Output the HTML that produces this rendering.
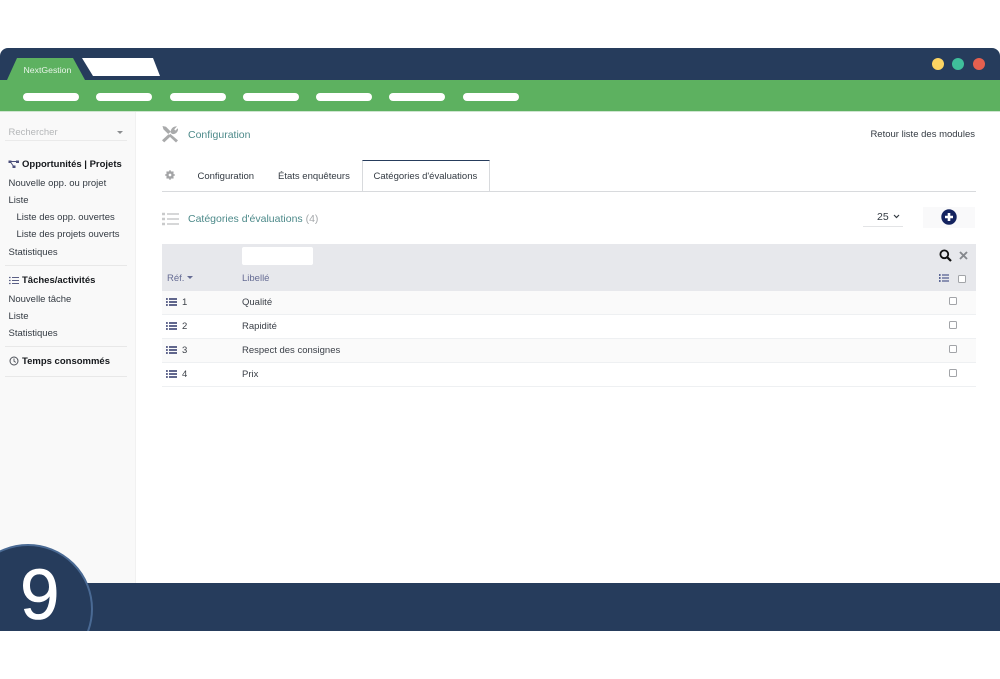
<!DOCTYPE html>
<html><head><meta charset="utf-8">
<style>
html,body{margin:0;padding:0;background:#fff}
body{width:1000px;height:679px;position:relative;overflow:hidden;font-family:"Liberation Sans",sans-serif;font-size:9.5px;color:#3a3f47}
#w{position:absolute;left:0;top:0;width:1000px;height:679px;overflow:hidden;filter:blur(.3px)}
.a{position:absolute;white-space:nowrap}
.pill{position:absolute;top:93px;width:56px;height:8px;border-radius:4px;background:#fff}
.s{position:absolute;left:8.5px;font-size:9.5px;line-height:12px;color:#333a42;white-space:nowrap}
.h{font-weight:bold;color:#15181c;left:22px}
.sep{position:absolute;left:5px;width:122px;height:1px;background:#e8e8e8}
.row{position:absolute;left:162px;width:814px;height:23px;border-bottom:1px solid #eef0f2}
.cb{position:absolute;width:6px;height:6px;border:1px solid #a2a4a8;border-radius:1.5px;background:#fff}
</style></head><body><div id="w">
<!-- window -->
<div class="a" style="left:0;top:48px;width:1000px;height:32px;background:#263c5c;border-radius:8px 8px 0 0"></div>
<div class="a" style="left:0;top:80px;width:1000px;height:31px;background:#5db160"></div>
<div class="a" style="left:0;top:111px;width:1000px;height:1px;background:#cfe5d0"></div>
<svg class="a" style="left:0;top:56px" width="170" height="26"><polygon points="7,24 17,2 73,2 85,24" fill="#5db160"/><polygon points="82,2 153,2 160,20 93,20" fill="#fff"/></svg>
<div class="a" style="left:23.5px;top:64px;font-size:8.7px;line-height:12px;color:#e8f4e8">NextGestion</div>
<div class="a" style="left:932px;top:58px;width:12px;height:12px;border-radius:50%;background:#fcd462"></div>
<div class="a" style="left:952px;top:58px;width:12px;height:12px;border-radius:50%;background:#3fbf9b"></div>
<div class="a" style="left:973px;top:58px;width:12px;height:12px;border-radius:50%;background:#e5604f"></div>
<div class="pill" style="left:23px"></div><div class="pill" style="left:96px"></div><div class="pill" style="left:170px"></div><div class="pill" style="left:243px"></div><div class="pill" style="left:316px"></div><div class="pill" style="left:389px"></div><div class="pill" style="left:463px"></div>

<!-- sidebar -->
<div class="a" style="left:0;top:112px;width:135px;height:472px;background:#f9f9f9;border-right:1px solid #f1f1f1"></div>
<div class="a" style="left:8.5px;top:127px;font-size:9.5px;line-height:12px;color:#b4b6b8">Rechercher</div>
<div class="a" style="left:117px;top:131px;width:0;height:0;border:3px solid transparent;border-top:3px solid #8b8d90;border-bottom:0"></div>
<div class="sep" style="top:140px;background:#eaeaea"></div>
<svg class="a" style="left:8px;top:160px" width="12" height="9"><path d="M1.5 1.5H10M2.5 2L6 7" stroke="#4b4f7a" stroke-width="1" fill="none"/><rect x=".5" y=".5" width="3" height="2.5" fill="#4b4f7a"/><rect x="8" y=".5" width="3" height="2.5" fill="#4b4f7a"/><rect x="4.5" y="5.5" width="3" height="2.5" fill="#4b4f7a"/></svg>
<div class="s h" style="top:159px">Opportunités | Projets</div>
<div class="s" style="top:178px">Nouvelle opp. ou projet</div>
<div class="s" style="top:195px">Liste</div>
<div class="s" style="top:212px;left:16.5px">Liste des opp. ouvertes</div>
<div class="s" style="top:229px;left:16.5px">Liste des projets ouverts</div>
<div class="s" style="top:247px">Statistiques</div>
<div class="sep" style="top:265px"></div>
<svg class="a" style="left:9px;top:276px" width="10" height="9"><path d="M3 1.5H10M3 4.5H10M3 7.5H10" stroke="#5a5f85" stroke-width="1"/><path d="M0 1.5H1.6M0 4.5H1.6M0 7.5H1.6" stroke="#5a5f85" stroke-width="1.2"/></svg>
<div class="s h" style="top:275px">Tâches/activités</div>
<div class="s" style="top:294px">Nouvelle tâche</div>
<div class="s" style="top:311px">Liste</div>
<div class="s" style="top:328px">Statistiques</div>
<div class="sep" style="top:346px"></div>
<svg class="a" style="left:8.5px;top:356px" width="10" height="10"><circle cx="5" cy="5" r="4" fill="none" stroke="#4c5058" stroke-width="1"/><path d="M5 2.5V5.2L6.8 6.4" stroke="#4c5058" stroke-width=".9" fill="none"/></svg>
<div class="s h" style="top:356px">Temps consommés</div>
<div class="sep" style="top:376px"></div>

<!-- heading -->
<svg class="a" style="left:161px;top:125px" width="18" height="18" viewBox="0 0 18 18"><path d="M1.5 1L5 1.8 9.8 6.6 7.2 9 2.4 4.3Z" fill="#a9aaab"/><path d="M7.5 9.2L1 15.3 3.2 17.4 9.8 11.2Z" fill="#a9aaab"/><path d="M9.6 7.6C9.4 3.8 12.4 .8 16 1.4L13.3 4.2 14.2 5.6 16.9 3.2C17.7 6.7 14.4 9.9 11 8.9Z" fill="#a9aaab"/><path d="M9.2 8.8L17 15.4 15 17.5 7.6 10.6Z" fill="#a9aaab"/></svg>
<div class="a" style="left:188px;top:128.5px;font-size:10.5px;line-height:13px;color:#4d8a8a">Configuration</div>
<div class="a" style="right:25px;top:129px;font-size:9.5px;line-height:12px;color:#333a42">Retour liste des modules</div>

<!-- tabs -->
<div class="a" style="left:162px;top:191px;width:814px;height:1px;background:#d8dadd"></div>
<svg class="a" style="left:165px;top:170px" width="10" height="10" viewBox="0 0 10 10"><circle cx="5" cy="5" r="2.6" fill="none" stroke="#a3a4a6" stroke-width="2.5"/><path d="M5 .2V2M5 8V9.8M.2 5H2M8 5H9.8M1.6 1.6L2.9 2.9M7.1 7.1L8.4 8.4M1.6 8.4L2.9 7.1M7.1 2.9L8.4 1.6" stroke="#a3a4a6" stroke-width="1.5"/></svg>
<div class="a" style="left:197.5px;top:171px;line-height:12px;color:#333a42">Configuration</div>
<div class="a" style="left:278px;top:171px;line-height:12px;color:#333a42">États enquêteurs</div>
<div class="a" style="left:362px;top:160px;width:126px;height:30px;background:#fff;border-top:1.5px solid #263c5c;border-left:1px solid #d8dadd;border-right:1px solid #d8dadd"></div>
<div class="a" style="left:373.5px;top:171px;line-height:12px;color:#333a42">Catégories d'évaluations</div>

<!-- section title -->
<svg class="a" style="left:162px;top:212px" width="17" height="14"><path d="M5 2H17M5 7H17M5 12H17" stroke="#c9cacb" stroke-width="1.6"/><path d="M0 2H3M0 7H3M0 12H3" stroke="#c9cacb" stroke-width="2.4"/></svg>
<div class="a" style="left:188px;top:213px;font-size:10.5px;line-height:13px;color:#4d8a8a">Catégories d'évaluations <span style="color:#a5a8ab">(4)</span></div>
<div class="a" style="left:877px;top:210.5px;font-size:10.5px;line-height:13px;color:#333a42">25</div>
<svg class="a" style="left:893px;top:214px" width="7" height="5"><path d="M1 1L3.5 3.5 6 1" stroke="#333a42" stroke-width="1.2" fill="none"/></svg>
<div class="a" style="left:863px;top:226px;width:40px;height:1px;background:#e3e4e6"></div>
<div class="a" style="left:923px;top:207px;width:52px;height:21px;background:#f9f9fa"></div>
<svg class="a" style="left:941px;top:209px" width="16" height="16"><circle cx="8" cy="8" r="7.7" fill="#14235f"/><path d="M8 4V12M4 8H12" stroke="#fff" stroke-width="2.6"/></svg>

<!-- table head -->
<div class="a" style="left:162px;top:244px;width:814px;height:47px;background:#e7e8ec"></div>
<div class="a" style="left:242px;top:247px;width:71px;height:18px;background:#fff;border-radius:2px"></div>
<div class="a" style="left:167px;top:273px;line-height:12px;color:#666c94">Réf.</div>
<div class="a" style="left:187px;top:276px;width:0;height:0;border:3px solid transparent;border-top:3px solid #666c94;border-bottom:0"></div>
<div class="a" style="left:242px;top:273px;line-height:12px;color:#666c94">Libellé</div>
<svg class="a" style="left:939px;top:249px" width="13" height="13"><circle cx="5.3" cy="5.3" r="3.9" fill="none" stroke="#111" stroke-width="1.8"/><path d="M8.2 8.2L12 12" stroke="#111" stroke-width="2.2"/></svg>
<svg class="a" style="left:959px;top:251px" width="9" height="9"><path d="M1 1L8 8M8 1L1 8" stroke="#85888d" stroke-width="1.9"/></svg>
<svg class="a" style="left:939px;top:274px" width="10" height="8"><path d="M3 1H10M3 4H10M3 7H10" stroke="#2d3a78" stroke-width="1.1"/><path d="M0 1H1.6M0 4H1.6M0 7H1.6" stroke="#2d3a78" stroke-width="1.4"/></svg>
<div class="cb" style="left:958px;top:275px"></div>

<!-- rows -->
<div class="row" style="top:291px;background:#fafafa"></div>
<div class="row" style="top:315px;background:#fff"></div>
<div class="row" style="top:339px;background:#fafafa"></div>
<div class="row" style="top:363px;background:#fff"></div>

<svg class="a" style="left:166px;top:298px" width="11" height="8"><path d="M3 1H11M3 4H11M3 7H11" stroke="#2d3568" stroke-width="1.4"/><path d="M0 1H1.8M0 4H1.8M0 7H1.8" stroke="#2d3568" stroke-width="1.6"/></svg>
<svg class="a" style="left:166px;top:322px" width="11" height="8"><path d="M3 1H11M3 4H11M3 7H11" stroke="#2d3568" stroke-width="1.4"/><path d="M0 1H1.8M0 4H1.8M0 7H1.8" stroke="#2d3568" stroke-width="1.6"/></svg>
<svg class="a" style="left:166px;top:346px" width="11" height="8"><path d="M3 1H11M3 4H11M3 7H11" stroke="#2d3568" stroke-width="1.4"/><path d="M0 1H1.8M0 4H1.8M0 7H1.8" stroke="#2d3568" stroke-width="1.6"/></svg>
<svg class="a" style="left:166px;top:370px" width="11" height="8"><path d="M3 1H11M3 4H11M3 7H11" stroke="#2d3568" stroke-width="1.4"/><path d="M0 1H1.8M0 4H1.8M0 7H1.8" stroke="#2d3568" stroke-width="1.6"/></svg>

<div class="a" style="left:182px;top:297px;line-height:12px">1</div>
<div class="a" style="left:182px;top:321px;line-height:12px">2</div>
<div class="a" style="left:182px;top:345px;line-height:12px">3</div>
<div class="a" style="left:182px;top:369px;line-height:12px">4</div>
<div class="a" style="left:242px;top:297px;line-height:12px">Qualité</div>
<div class="a" style="left:242px;top:321px;line-height:12px">Rapidité</div>
<div class="a" style="left:242px;top:345px;line-height:12px">Respect des consignes</div>
<div class="a" style="left:242px;top:369px;line-height:12px">Prix</div>
<div class="cb" style="left:949px;top:297px"></div>
<div class="cb" style="left:949px;top:321px"></div>
<div class="cb" style="left:949px;top:345px"></div>
<div class="cb" style="left:949px;top:369px"></div>

<!-- footer -->
<div class="a" style="left:0;top:583px;width:1000px;height:48px;background:#263c5c"></div>
<div class="a" style="left:0;top:530px;width:120px;height:101px;overflow:hidden">
  <div class="a" style="left:-37px;top:14px;width:126px;height:126px;border-radius:50%;background:#263c5c;border:2px solid #4a6a94"></div>
  <div class="a" style="left:20px;top:25px;font-size:71px;line-height:82px;color:#fff;-webkit-text-stroke:.6px #fff">9</div>
</div>
</div></body></html>
